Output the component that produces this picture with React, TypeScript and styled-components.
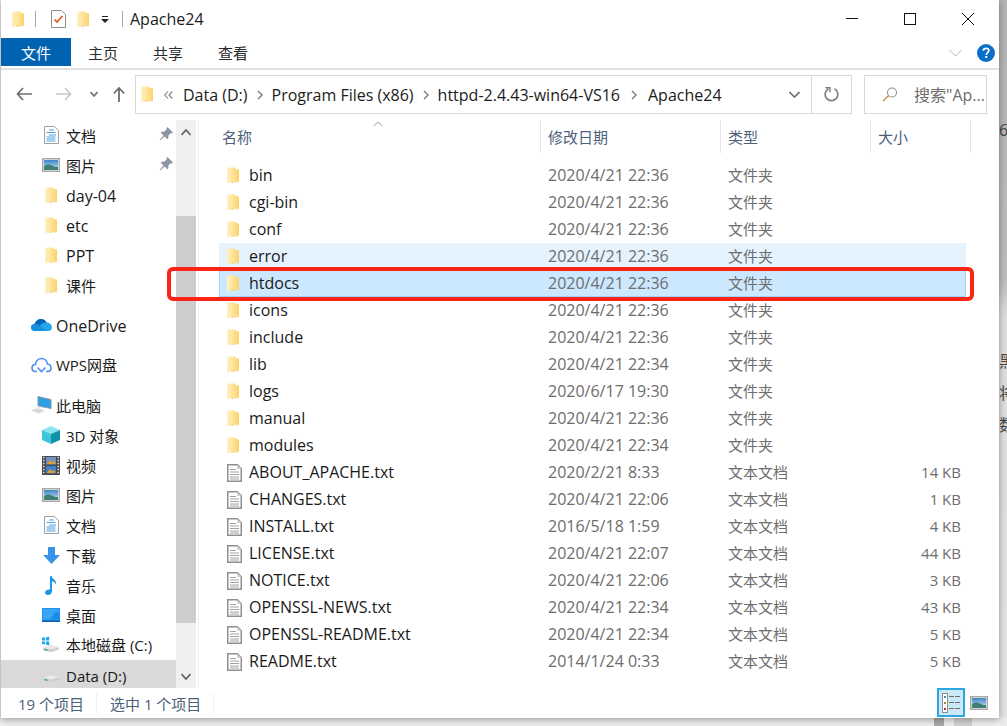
import React from 'react';
import styled, { createGlobalStyle } from 'styled-components';

const GlobalStyle = createGlobalStyle`
  html, body {
    margin: 0;
    padding: 0;
    overflow: hidden;
    background: #ececec;
  }
  body {
    font-family: "Open Sans", "Noto Sans CJK SC", sans-serif;
    font-size: 16px;
    color: #1a1a1a;
  }
`;

const Stage = styled.div`
  width: 1007px;
  height: 726px;
  display: flex;
  flex-direction: column;
  overflow: hidden;
`;

const StageTop = styled.div`
  display: flex;
  height: 718px;
`;

const Window = styled.div`
  position: relative;
  z-index: 1;
  width: 998px;
  height: 718px;
  margin-left: 1px;
  background: #fff;
  display: flex;
  flex-direction: column;
  box-shadow: 0 1px 7px rgba(0, 0, 0, 0.38);
`;

const BehindStrip = styled.div`
  width: 8px;
  height: 718px;
  overflow: hidden;
  background: linear-gradient(#b4b4b4 0, #bdbdbd 280px, #dedede 315px, #e6e6e6 100%);
  color: #444;
  font-size: 16px;
  line-height: 32px;
  padding-top: 114px;
  box-sizing: border-box;
`;

const BehindGlyph = styled.div<{ $gap?: number }>`
  margin-top: ${p => p.$gap ?? 0}px;
  white-space: nowrap;
`;

const StageBottom = styled.div`
  height: 8px;
  display: flex;
  padding-left: 934px;
  gap: 10px;
`;

const BottomBit = styled.div<{ $w: number; $c: string }>`
  width: ${p => p.$w}px;
  height: 8px;
  background: ${p => p.$c};
`;

/* title bar */
const TitleBar = styled.div`
  height: 38px;
  display: flex;
  align-items: center;
  flex-shrink: 0;
`;

const QuickAccess = styled.div`
  display: flex;
  align-items: center;
  padding-left: 11px;
`;

const QuickGap = styled.span<{ $w: number }>`
  width: ${p => p.$w}px;
`;

const TitleSep = styled.div<{ $ml: number; $mr: number }>`
  width: 1px;
  height: 16px;
  background: #a8a8a8;
  margin: 0 ${p => p.$mr}px 0 ${p => p.$ml}px;
`;

const TitleText = styled.div`
  font-size: 16px;
  margin-left: 7px;
  color: #1c1c1c;
  flex: 1;
`;

const WindowButtons = styled.div`
  display: flex;
  align-items: center;
  padding-right: 2px;
`;

const WindowButton = styled.div`
  width: 58px;
  height: 38px;
  display: flex;
  align-items: center;
  justify-content: center;
`;

/* ribbon */
const Ribbon = styled.div`
  height: 32px;
  box-sizing: border-box;
  border-bottom: 2px solid #e1e1e1;
  display: flex;
  align-items: flex-start;
  flex-shrink: 0;
`;

const FileTab = styled.div`
  width: 70px;
  height: 28px;
  background: #0063b1;
  color: #fff;
  font-size: 15px;
  display: flex;
  align-items: center;
  justify-content: center;
`;

const RibbonTab = styled.div<{ $w: number }>`
  width: ${p => p.$w}px;
  height: 28px;
  font-size: 15px;
  color: #2b2b2b;
  display: flex;
  align-items: center;
  padding-left: 17px;
  box-sizing: border-box;
`;

const RibbonRight = styled.div`
  margin-left: auto;
  display: flex;
  align-items: center;
  height: 29px;
  gap: 15px;
  padding-right: 4px;
`;

/* address row */
const AddressRow = styled.div`
  height: 50px;
  display: flex;
  align-items: flex-start;
  padding-top: 5px;
  box-sizing: border-box;
  flex-shrink: 0;
`;

const NavButtons = styled.div`
  width: 134px;
  height: 38px;
  display: flex;
  align-items: center;
  padding-left: 15px;
  box-sizing: border-box;
`;

const NavSlot = styled.div<{ $w: number }>`
  width: ${p => p.$w}px;
  display: flex;
  align-items: center;
`;

const AddressBox = styled.div`
  width: 717px;
  height: 39px;
  box-sizing: border-box;
  border: 1px solid #d9d9d9;
  display: flex;
  align-items: center;
  padding-left: 5px;
`;

const Crumb = styled.span`
  font-size: 16px;
  color: #1c1c1c;
  white-space: nowrap;
`;

const CrumbSep = styled.span<{ $w: number }>`
  width: ${p => p.$w}px;
  display: flex;
  justify-content: center;
  flex-shrink: 0;
`;

const AddressEnd = styled.div`
  margin-left: auto;
  display: flex;
  height: 100%;
  align-items: center;
`;

const DropSlot = styled.div`
  width: 34px;
  display: flex;
  justify-content: center;
`;

const RefreshSlot = styled.div`
  width: 39px;
  height: 100%;
  border-left: 1px solid #d9d9d9;
  display: flex;
  align-items: center;
  justify-content: center;
`;

const SearchBox = styled.div`
  width: 123px;
  height: 39px;
  box-sizing: border-box;
  border: 1px solid #d9d9d9;
  margin-left: 12px;
  display: flex;
  align-items: center;
  padding-left: 17px;
  padding-bottom: 1px;
  gap: 16px;
  color: #6d6d6d;
  font-size: 16px;
  white-space: nowrap;
  overflow: hidden;
`;

/* body */
const Body = styled.div`
  flex: 1;
  min-height: 0;
  display: flex;
  overflow: hidden;
`;

const Sidebar = styled.div`
  width: 175px;
  flex-shrink: 0;
  overflow: hidden;
`;

const NavGroup = styled.div`
  margin-bottom: 10px;
`;

const NavRow = styled.div<{ $level: number; $active?: boolean; $cjk: boolean }>`
  height: 30px;
  display: flex;
  align-items: center;
  position: relative;
  padding-left: ${p => (p.$level ? 41 : 30)}px;
  background: ${p => (p.$active ? '#d9d9d9' : 'transparent')};
  color: #1a1a1a;
  font-size: ${p => (p.$cjk ? 15 : 16)}px;
  white-space: nowrap;
`;

const NavIcon = styled.span<{ $level: number }>`
  width: ${p => (p.$level ? 18 : 21)}px;
  margin-right: ${p => (p.$level ? 6 : 4)}px;
  display: flex;
  align-items: center;
  justify-content: center;
  flex-shrink: 0;
`;

/* nudges the label a pixel: latin and mixed lines sit differently from pure CJK ones */
const NavLabel = styled.span<{ $nudge: number }>`
  margin-top: ${p => Math.max(p.$nudge, 0) * 2}px;
  margin-bottom: ${p => Math.max(-p.$nudge, 0) * 2}px;
`;

const PinMark = styled.span`
  position: absolute;
  right: 3px;
  top: 7px;
  display: flex;
`;

const Scrollbar = styled.div`
  width: 20px;
  flex-shrink: 0;
  background: #f0f0f0;
  display: flex;
  flex-direction: column;
  margin-right: 2px;
`;

const ScrollArrow = styled.div<{ $h: number }>`
  height: ${p => p.$h}px;
  display: flex;
  align-items: center;
  justify-content: center;
  flex-shrink: 0;
`;

const ScrollThumb = styled.div`
  height: 407px;
  margin-top: 72px;
  margin-bottom: auto;
  background: #cdcdcd;
`;

const Main = styled.div`
  flex: 1;
  min-width: 0;
  border-left: 1px solid #f0f0f0;
  display: flex;
  flex-direction: column;
`;

const Header = styled.div`
  height: 33px;
  display: flex;
  position: relative;
  flex-shrink: 0;
`;

const HeaderCell = styled.div<{ $w: number; $pl?: number }>`
  width: ${p => p.$w}px;
  box-sizing: border-box;
  border-right: 1px solid #e5e5e5;
  padding-left: ${p => p.$pl ?? 7}px;
  padding-top: 6px;
  font-size: 15px;
  color: #4c607a;
`;

const SortCaret = styled.span`
  position: absolute;
  left: 174px;
  top: 1px;
  display: flex;
`;

const List = styled.div`
  padding: 9px 0 0 20px;
`;

const Row = styled.div<{ $state?: 'hover' | 'selected' }>`
  width: 747px;
  height: 27px;
  box-sizing: border-box;
  display: grid;
  grid-template-columns: 329px 180px 1fr 100px;
  padding-right: 5px;
  padding-bottom: 1px;
  align-items: center;
  background: ${p => (p.$state === 'selected' ? '#cce8ff' : p.$state === 'hover' ? '#e5f3ff' : 'transparent')};
  box-shadow: ${p => (p.$state === 'selected' ? 'inset 0 0 0 1px #99d1ff' : 'none')};
`;

const NameCell = styled.div`
  display: flex;
  align-items: center;
  padding-left: 8px;
  color: #1a1a1a;
  font-size: 16px;
  white-space: nowrap;
`;

const NameIcon = styled.span`
  width: 22px;
  display: flex;
  align-items: center;
  margin-top: 1px;
`;

const MetaCell = styled.div<{ $right?: boolean; $size: number; $lift?: boolean }>`
  color: #6d6d6d;
  font-size: ${p => p.$size}px;
  white-space: nowrap;
  text-align: ${p => (p.$right ? 'right' : 'left')};
  margin-bottom: ${p => (p.$lift ? 2 : 0)}px;
`;

const RedMark = styled.div`
  position: absolute;
  left: 166px;
  top: 267px;
  width: 807px;
  height: 34px;
  box-sizing: border-box;
  border: 4px solid #fb2415;
  border-radius: 6px;
  pointer-events: none;
`;

/* status bar */
const StatusBar = styled.div`
  height: 30px;
  display: flex;
  align-items: center;
  flex-shrink: 0;
  font-size: 15px;
  color: #4c607a;
`;

const StatusItem = styled.div<{ $w: number; $pl: number }>`
  width: ${p => p.$w}px;
  box-sizing: border-box;
  padding-left: ${p => p.$pl}px;
  border-right: 1px solid #f0f0f0;
  white-space: nowrap;
`;

const ViewButtons = styled.div`
  margin-left: auto;
  display: flex;
  align-items: flex-start;
  height: 30px;
  padding-right: 6px;
`;

const ViewButton = styled.div<{ $on?: boolean }>`
  width: 28px;
  height: 29px;
  box-sizing: border-box;
  border: 2px solid ${p => (p.$on ? '#2ea6df' : 'transparent')};
  background: ${p => (p.$on ? '#cbe8f6' : 'transparent')};
  display: flex;
  align-items: center;
  justify-content: center;
`;

/* icons */
const Folder: React.FC = () => (
  <svg width="12" height="17" viewBox="0 0 12 17">
    <defs>
      <linearGradient id="fd" x1="0" y1="0" x2="1" y2="0">
        <stop offset="0" stopColor="#fff1c6" />
        <stop offset=".35" stopColor="#ffe9a6" />
        <stop offset="1" stopColor="#fbd268" />
      </linearGradient>
    </defs>
    <path d="M0 1.500Q0 .5 1 .5H8L9 2 12 2.500V14.500H4.500L1 16.500Q0 16.800 0 16z" fill="url(#fd)" />
    <path d="M3 14.500V3" stroke="#fde3a0" strokeWidth=".6" />
    <path d="M4.500 14.500H12V15.200H8L4 16z" fill="#f4cb70" />
  </svg>
);

const TextFile: React.FC = () => (
  <svg width="15" height="18" viewBox="0 0 15 18">
    <path d="M.75.75h9.500l4 4v12.500H.75z" fill="#fff" stroke="#8f8f8f" strokeWidth="1.500" />
    <path d="M10 1v4h4.500z" fill="#d4d4d4" />
    <path d="M3 5.500h6M3 8h9M3 10.500h9M3 13h9M3 15h9" stroke="#a2a2a2" strokeWidth="1" />
  </svg>
);

const Pin: React.FC = () => (
  <svg width="14" height="14" viewBox="0 0 14 14">
    <path d="M8.500 0 14 5.500l-1.300 1-1-.2-2.500 2.500.3 2.200-1.200 1.200-2.800-2.800L1 13.500l-.5-.5 4-4.500L1.700 5.700 3 4.500l2.200.3 2.500-2.500-.2-1z" fill="#8d97a3" />
  </svg>
);

const Docs: React.FC = () => (
  <svg width="15" height="18" viewBox="0 0 15 18">
    <path d="M.5.5h10l4 4v13H.5z" fill="#fff" stroke="#a0a0a0" />
    <path d="M5 4h5M2.500 6.500h9M5 9h7M2.500 11h9M2.500 13h9M2.500 15h9" stroke="#4b9fe0" strokeWidth="1" />
  </svg>
);

const Picture: React.FC = () => (
  <svg width="18" height="14" viewBox="0 0 18 14">
    <defs>
      <linearGradient id="sky" x1="0" y1="0" x2="0" y2="1">
        <stop offset="0" stopColor="#3b86c8" />
        <stop offset="1" stopColor="#cfe6f2" />
      </linearGradient>
    </defs>
    <rect x=".75" y=".75" width="16.500" height="12.500" fill="#fff" stroke="#a7a7a7" strokeWidth="1.500" />
    <rect x="2" y="2" width="14" height="10" fill="url(#sky)" />
    <path d="M2 8.500c3-3 6-2 9-.500s4 1 5 1v3H2z" fill="#3f7f75" />
  </svg>
);

const OneDriveIcon: React.FC = () => (
  <svg width="21" height="14" viewBox="0 0 21 14">
    <path d="M4 13C1.500 13 0 11.500 0 9.500 0 7.500 1.500 6 3.500 6 4.500 3 7 1 10 1c2.500 0 4.500 1.300 5.500 3.500C18.500 4.500 21 6.500 21 9.500c0 2-1.500 3.500-3.500 3.500z" fill="#28a8ea" />
    <path d="M3.500 6C4.500 3 7 1 10 1c2.500 0 4.500 1.300 5.500 3.500C12 4.500 10 6 9 8 7.500 6.800 5.500 6 3.500 6z" fill="#0364b8" />
    <path d="M0 9.500C0 7.500 1.500 6 3.500 6 5.500 6 7.500 6.800 9 8l6 5H4C1.500 13 0 11.500 0 9.500z" fill="#1490df" />
  </svg>
);

const WpsCloud: React.FC = () => (
  <svg width="21" height="16" viewBox="0 0 21 16" fill="none">
    <path d="M6 14.500H4.500C2.300 14.500 1 13 1 11c0-2 1.500-3.500 3.500-3.500C5 4 7.500 1.500 10.500 1.500s5.500 2.300 6 5.500c2 .3 3.500 2 3.500 4 0 2-1.500 3.500-3.700 3.500H15" stroke="#4a8cf0" strokeWidth="1.600" />
    <path d="M6.500 10.500 10.500 14.500l4-4" stroke="#4a8cf0" strokeWidth="1.600" />
  </svg>
);

const ThisPc: React.FC = () => (
  <svg width="21" height="18" viewBox="0 0 21 18">
    <path d="M7 .500l13 3v9L7 10z" fill="#2d9fe3" stroke="#8a9aa8" />
    <path d="M0 14.500 6 12l8 2.500-6 3z" fill="#d9d9d9" />
    <path d="M4 11.500l5-1 3 1.500-5 1z" fill="#eee" />
  </svg>
);

const Cube: React.FC = () => (
  <svg width="18" height="18" viewBox="0 0 18 18">
    <path d="M9 0l9 4-9 4-9-4z" fill="#8fe4ee" />
    <path d="M0 4l9 4v10l-9-4z" fill="#3cc6da" />
    <path d="M18 4 9 8v10l9-4z" fill="#0f93ab" />
  </svg>
);

const Film: React.FC = () => (
  <svg width="18" height="19" viewBox="0 0 18 19">
    <rect width="18" height="19" fill="#4a4a4a" />
    <path d="M1 1.500h1.500M1 4.500h1.500M1 7.500h1.500M1 10.500h1.500M1 13.500h1.500M1 16.500h1.500M15.500 1.500H17M15.500 4.500H17M15.500 7.500H17M15.500 10.500H17M15.500 13.500H17M15.500 16.500H17" stroke="#ddd" strokeWidth="1.500" />
    <rect x="4" y="1" width="10" height="7.500" fill="#6b93c9" />
    <rect x="4" y="10" width="10" height="7.500" fill="#3e7fd0" />
    <path d="M5 8l3-4 2 2 3-1v3zM5 17l3-4 2 2 3-1v3z" fill="#e0a030" />
  </svg>
);

const DownloadIcon: React.FC = () => (
  <svg width="17" height="17" viewBox="0 0 17 17">
    <path d="M5 0h7v8h5l-8.500 9L0 8h5z" fill="#3a93e6" />
  </svg>
);

const Note: React.FC = () => (
  <svg width="12" height="19" viewBox="0 0 12 19">
    <path d="M5 0h1.500c.5 3 5.500 4 4.500 8.500C10 6 8 5.500 7 5.500V15c0 2.500-2 4-4 4s-3-1-3-2.500C0 14.500 2 13 5 13.500z" fill="#1f94ea" />
  </svg>
);

const DesktopIcon: React.FC = () => (
  <svg width="18" height="14" viewBox="0 0 18 14">
    <rect width="18" height="13" fill="#1e90f0" />
    <path d="M1 1h16v10.500H1z" fill="#39a4f5" />
    <path d="M8 11.500 14 3l3 2v6.500z" fill="#1a8be8" />
    <rect y="12.500" width="18" height="1.500" fill="#0c5ea8" />
  </svg>
);

const Drive: React.FC<{ win?: boolean }> = ({ win }) => (
  <svg width="20" height="20" viewBox="0 0 20 20">
    <path d="M1 13l8-3 10 2.500V15l-9 3-9-2.500z" fill="#cfcfcf" />
    <path d="M1 13l8-3 10 2.500-9 2.500z" fill="#eaeaea" />
    <path d="M3 15l3 1" stroke="#2fae4e" strokeWidth="1.500" />
    {win && (
      <path d="M0 2l3.500-.5V5H0zM4.500 1.300 8 .8V5H4.500zM0 6h3.500v3.500L0 9zM4.500 6H8v4.200l-3.500-.5z" fill="#22a7e8" />
    )}
  </svg>
);

const Back: React.FC<{ color: string; flip?: boolean }> = ({ color, flip }) => (
  <svg width="17" height="14" viewBox="0 0 17 14">
    <path
      d={flip ? 'M10 1l5.500 6L10 13M15.500 7H1' : 'M7 1 1.500 7 7 13M1.500 7H16'}
      fill="none"
      stroke={color}
      strokeWidth="1.700"
    />
  </svg>
);

const Chevron: React.FC<{ color?: string; w?: number; h?: number; sw?: number; up?: boolean }> = ({
  color = '#6d6d6d',
  w = 9,
  h = 6,
  sw = 1.600,
  up,
}) => (
  <svg width={w} height={h} viewBox={`0 0 ${w} ${h}`}>
    <path
      d={up ? `M.5 ${h - 1}L${w / 2} 1 ${w - 0.5} ${h - 1}` : `M.5 1L${w / 2} ${h - 1} ${w - 0.5} 1`}
      fill="none"
      stroke={color}
      strokeWidth={sw}
    />
  </svg>
);

const CrumbArrow: React.FC = () => (
  <svg width="6" height="10" viewBox="0 0 6 10">
    <path d="M1 1l4 4-4 4" fill="none" stroke="#7a7a7a" strokeWidth="1.400" />
  </svg>
);

const DoubleArrow: React.FC = () => (
  <svg width="9" height="8" viewBox="0 0 9 8">
    <path d="M4 .500.800 4 4 7.500M8.300.500 5 4l3.300 3.500" fill="none" stroke="#808080" strokeWidth="1.100" />
  </svg>
);

const Up: React.FC = () => (
  <svg width="12" height="15" viewBox="0 0 12 15">
    <path d="M.8 6.500 6 1l5.200 5.500M6 1v14" fill="none" stroke="#6d6d6d" strokeWidth="1.800" />
  </svg>
);

const Refresh: React.FC = () => (
  <svg width="15" height="15" viewBox="0 0 15 15">
    <path d="M4.500 1.800A6.300 6.300 0 1 0 10.500 1.800" fill="none" stroke="#808080" strokeWidth="1.700" />
    <path d="M1.500 .800h4.500v4.500" fill="none" stroke="#808080" strokeWidth="1.400" />
  </svg>
);

const SearchGlass: React.FC = () => (
  <svg width="16" height="15" viewBox="0 0 16 15">
    <circle cx="10" cy="5.500" r="4.500" fill="none" stroke="#8d8d8d" strokeWidth="1.100" />
    <path d="M6.500 8.800 1 14" stroke="#c98a4b" strokeWidth="1.300" />
  </svg>
);

const HelpIcon: React.FC = () => (
  <svg width="18" height="18" viewBox="0 0 18 18">
    <circle cx="9" cy="9" r="9" fill="#0a6fc9" />
    <path d="M6.300 6.800C6.400 5.200 7.500 4.300 9.100 4.300c1.600 0 2.700.9 2.700 2.300 0 2.100-2.500 2.100-2.500 4.300" fill="none" stroke="#fff" strokeWidth="1.700" />
    <rect x="8.300" y="12" width="1.900" height="2" fill="#fff" />
  </svg>
);

const TaskDoc: React.FC = () => (
  <svg width="15" height="18" viewBox="0 0 15 18">
    <path d="M.5.5h10l4 4v13H.5z" fill="#fff" stroke="#8e8e8e" />
    <path d="M3.500 9.500 6 12l5.500-6" fill="none" stroke="#e5551f" strokeWidth="1.700" />
  </svg>
);

const QuickDrop: React.FC = () => (
  <svg width="8" height="7" viewBox="0 0 8 7">
    <rect x="1" width="6" height="1" fill="#222" />
    <path d="M0 3h8L4 7z" fill="#222" />
  </svg>
);

const DetailsIcon: React.FC = () => (
  <svg width="19" height="20" viewBox="0 0 19 20">
    <rect x=".5" y=".5" width="5" height="19" fill="#fff" stroke="#8e8e8e" />
    <rect x="2" y="3" width="2" height="2" fill="#4c8dae" />
    <rect x="2" y="9" width="2" height="2" fill="#8f8f2a" />
    <rect x="2" y="15" width="2" height="2" fill="#b33a1a" />
    <path d="M7 3.500h12M7 9.500h12M7 15.500h12" stroke="#6d6d6d" strokeWidth="1" strokeDasharray="5 1" />
  </svg>
);

type NavItem = { label: string; icon: React.ReactNode; level: number; pin?: boolean; active?: boolean; nudge?: number };

const navGroups: NavItem[][] = [
  [
    { label: '文档', icon: <Docs />, level: 1, pin: true },
    { label: '图片', icon: <Picture />, level: 1, pin: true },
    { label: 'day-04', icon: <Folder />, level: 1, nudge: 1 },
    { label: 'etc', icon: <Folder />, level: 1, nudge: 1 },
    { label: 'PPT', icon: <Folder />, level: 1, nudge: 1 },
    { label: '课件', icon: <Folder />, level: 1 },
  ],
  [{ label: 'OneDrive', icon: <OneDriveIcon />, level: 0, nudge: 1 }],
  [{ label: 'WPS网盘', icon: <WpsCloud />, level: 0, nudge: -1 }],
  [
    { label: '此电脑', icon: <ThisPc />, level: 0 },
    { label: '3D 对象', icon: <Cube />, level: 1 },
    { label: '视频', icon: <Film />, level: 1 },
    { label: '图片', icon: <Picture />, level: 1 },
    { label: '文档', icon: <Docs />, level: 1 },
    { label: '下载', icon: <DownloadIcon />, level: 1 },
    { label: '音乐', icon: <Note />, level: 1 },
    { label: '桌面', icon: <DesktopIcon />, level: 1 },
    { label: '本地磁盘 (C:)', icon: <Drive win />, level: 1, nudge: -1 },
    { label: 'Data (D:)', icon: <Drive />, level: 1, active: true, nudge: 1 },
  ],
];

type FileRow = { name: string; date: string; size?: string; state?: 'hover' | 'selected' };

const files: FileRow[] = [
  { name: 'bin', date: '2020/4/21 22:36' },
  { name: 'cgi-bin', date: '2020/4/21 22:36' },
  { name: 'conf', date: '2020/4/21 22:36' },
  { name: 'error', date: '2020/4/21 22:36', state: 'hover' },
  { name: 'htdocs', date: '2020/4/21 22:36', state: 'selected' },
  { name: 'icons', date: '2020/4/21 22:36' },
  { name: 'include', date: '2020/4/21 22:36' },
  { name: 'lib', date: '2020/4/21 22:34' },
  { name: 'logs', date: '2020/6/17 19:30' },
  { name: 'manual', date: '2020/4/21 22:36' },
  { name: 'modules', date: '2020/4/21 22:34' },
  { name: 'ABOUT_APACHE.txt', date: '2020/2/21 8:33', size: '14 KB' },
  { name: 'CHANGES.txt', date: '2020/4/21 22:06', size: '1 KB' },
  { name: 'INSTALL.txt', date: '2016/5/18 1:59', size: '4 KB' },
  { name: 'LICENSE.txt', date: '2020/4/21 22:07', size: '44 KB' },
  { name: 'NOTICE.txt', date: '2020/4/21 22:06', size: '3 KB' },
  { name: 'OPENSSL-NEWS.txt', date: '2020/4/21 22:34', size: '43 KB' },
  { name: 'OPENSSL-README.txt', date: '2020/4/21 22:34', size: '5 KB' },
  { name: 'README.txt', date: '2014/1/24 0:33', size: '5 KB' },
];

const hasCjk = (text: string) => /[^\x00-\x7f]/.test(text);

export default function App() {
  return (
    <Stage>
      <GlobalStyle />
      <StageTop>
        <Window>
          <TitleBar>
            <QuickAccess>
              <Folder />
              <TitleSep $ml={11} $mr={15} />
              <TaskDoc />
              <QuickGap $w={11} />
              <Folder />
              <QuickGap $w={12} />
              <QuickDrop />
              <TitleSep $ml={13} $mr={0} />
            </QuickAccess>
            <TitleText>Apache24</TitleText>
            <WindowButtons>
              <WindowButton>
                <svg width="12" height="12" viewBox="0 0 12 12">
                  <rect y="5" width="12" height="1" fill="#111" />
                </svg>
              </WindowButton>
              <WindowButton>
                <svg width="12" height="12" viewBox="0 0 12 12">
                  <rect x=".5" y=".5" width="11" height="11" fill="none" stroke="#111" />
                </svg>
              </WindowButton>
              <WindowButton>
                <svg width="12" height="12" viewBox="0 0 12 12">
                  <path d="M0 0l12 12M12 0 0 12" stroke="#111" strokeWidth="1" />
                </svg>
              </WindowButton>
            </WindowButtons>
          </TitleBar>

          <Ribbon>
            <FileTab>文件</FileTab>
            <RibbonTab $w={65}>主页</RibbonTab>
            <RibbonTab $w={65}>共享</RibbonTab>
            <RibbonTab $w={65}>查看</RibbonTab>
            <RibbonRight>
              <Chevron color="#b4b4b4" w={13} h={8} sw={1} />
              <HelpIcon />
            </RibbonRight>
          </Ribbon>

          <AddressRow>
            <NavButtons>
              <NavSlot $w={39}>
                <Back color="#6d6d6d" />
              </NavSlot>
              <NavSlot $w={35}>
                <Back color="#c9c9c9" flip />
              </NavSlot>
              <NavSlot $w={23}>
                <Chevron w={8} h={6} />
              </NavSlot>
              <NavSlot $w={14}>
                <Up />
              </NavSlot>
            </NavButtons>
            <AddressBox>
              <Folder />
              <CrumbSep $w={30}>
                <DoubleArrow />
              </CrumbSep>
              <Crumb>Data (D:)</Crumb>
              <CrumbSep $w={24}><CrumbArrow /></CrumbSep>
              <Crumb>Program Files (x86)</Crumb>
              <CrumbSep $w={24}><CrumbArrow /></CrumbSep>
              <Crumb>httpd-2.4.43-win64-VS16</Crumb>
              <CrumbSep $w={28}><CrumbArrow /></CrumbSep>
              <Crumb>Apache24</Crumb>
              <AddressEnd>
                <DropSlot>
                  <Chevron w={11} h={7} />
                </DropSlot>
                <RefreshSlot>
                  <Refresh />
                </RefreshSlot>
              </AddressEnd>
            </AddressBox>
            <SearchBox>
              <SearchGlass />
              <span>搜索"Ap...</span>
            </SearchBox>
          </AddressRow>

          <Body>
            <Sidebar>
              {navGroups.map((group, i) => (
                <NavGroup key={i}>
                  {group.map(item => (
                    <NavRow
                      key={item.label}
                      $level={item.level}
                      $active={item.active}
                      $cjk={hasCjk(item.label) || item.active === true}
                    >
                      <NavIcon $level={item.level}>{item.icon}</NavIcon>
                      <NavLabel $nudge={item.nudge ?? 0}>{item.label}</NavLabel>
                      {item.pin && (
                        <PinMark>
                          <Pin />
                        </PinMark>
                      )}
                    </NavRow>
                  ))}
                </NavGroup>
              ))}
            </Sidebar>
            <Scrollbar>
              <ScrollArrow $h={24}>
                <Chevron color="#606060" up w={10} h={7} />
              </ScrollArrow>
              <ScrollThumb />
              <ScrollArrow $h={23}>
                <Chevron color="#606060" w={10} h={7} />
              </ScrollArrow>
            </Scrollbar>
            <Main>
              <Header>
                <SortCaret>
                  <Chevron color="#a0a0a0" up w={10} h={6} sw={1} />
                </SortCaret>
                <HeaderCell $w={342} $pl={23}>名称</HeaderCell>
                <HeaderCell $w={180}>修改日期</HeaderCell>
                <HeaderCell $w={150}>类型</HeaderCell>
                <HeaderCell $w={100}>大小</HeaderCell>
              </Header>
              <List>
                {files.map(file => (
                  <Row key={file.name} $state={file.state}>
                    <NameCell>
                      <NameIcon>{file.size ? <TextFile /> : <Folder />}</NameIcon>
                      {file.name}
                    </NameCell>
                    <MetaCell $size={16}>{file.date}</MetaCell>
                    <MetaCell $size={15} $lift>{file.size ? '文本文档' : '文件夹'}</MetaCell>
                    <MetaCell $size={15} $right>{file.size}</MetaCell>
                  </Row>
                ))}
              </List>
            </Main>
          </Body>

          <StatusBar>
            <StatusItem $w={96} $pl={17}>19 个项目</StatusItem>
            <StatusItem $w={117} $pl={13}>选中 1 个项目</StatusItem>
            <ViewButtons>
              <ViewButton $on>
                <DetailsIcon />
              </ViewButton>
              <ViewButton>
                <Picture />
              </ViewButton>
            </ViewButtons>
          </StatusBar>

          <RedMark />
        </Window>
        <BehindStrip>
          <BehindGlyph>6</BehindGlyph>
          <BehindGlyph $gap={199}>黑</BehindGlyph>
          <BehindGlyph>将</BehindGlyph>
          <BehindGlyph>数</BehindGlyph>
        </BehindStrip>
      </StageTop>
      <StageBottom>
        <BottomBit $w={10} $c="#a8a8a8" />
        <BottomBit $w={18} $c="#cfcfcf" />
      </StageBottom>
    </Stage>
  );
}
